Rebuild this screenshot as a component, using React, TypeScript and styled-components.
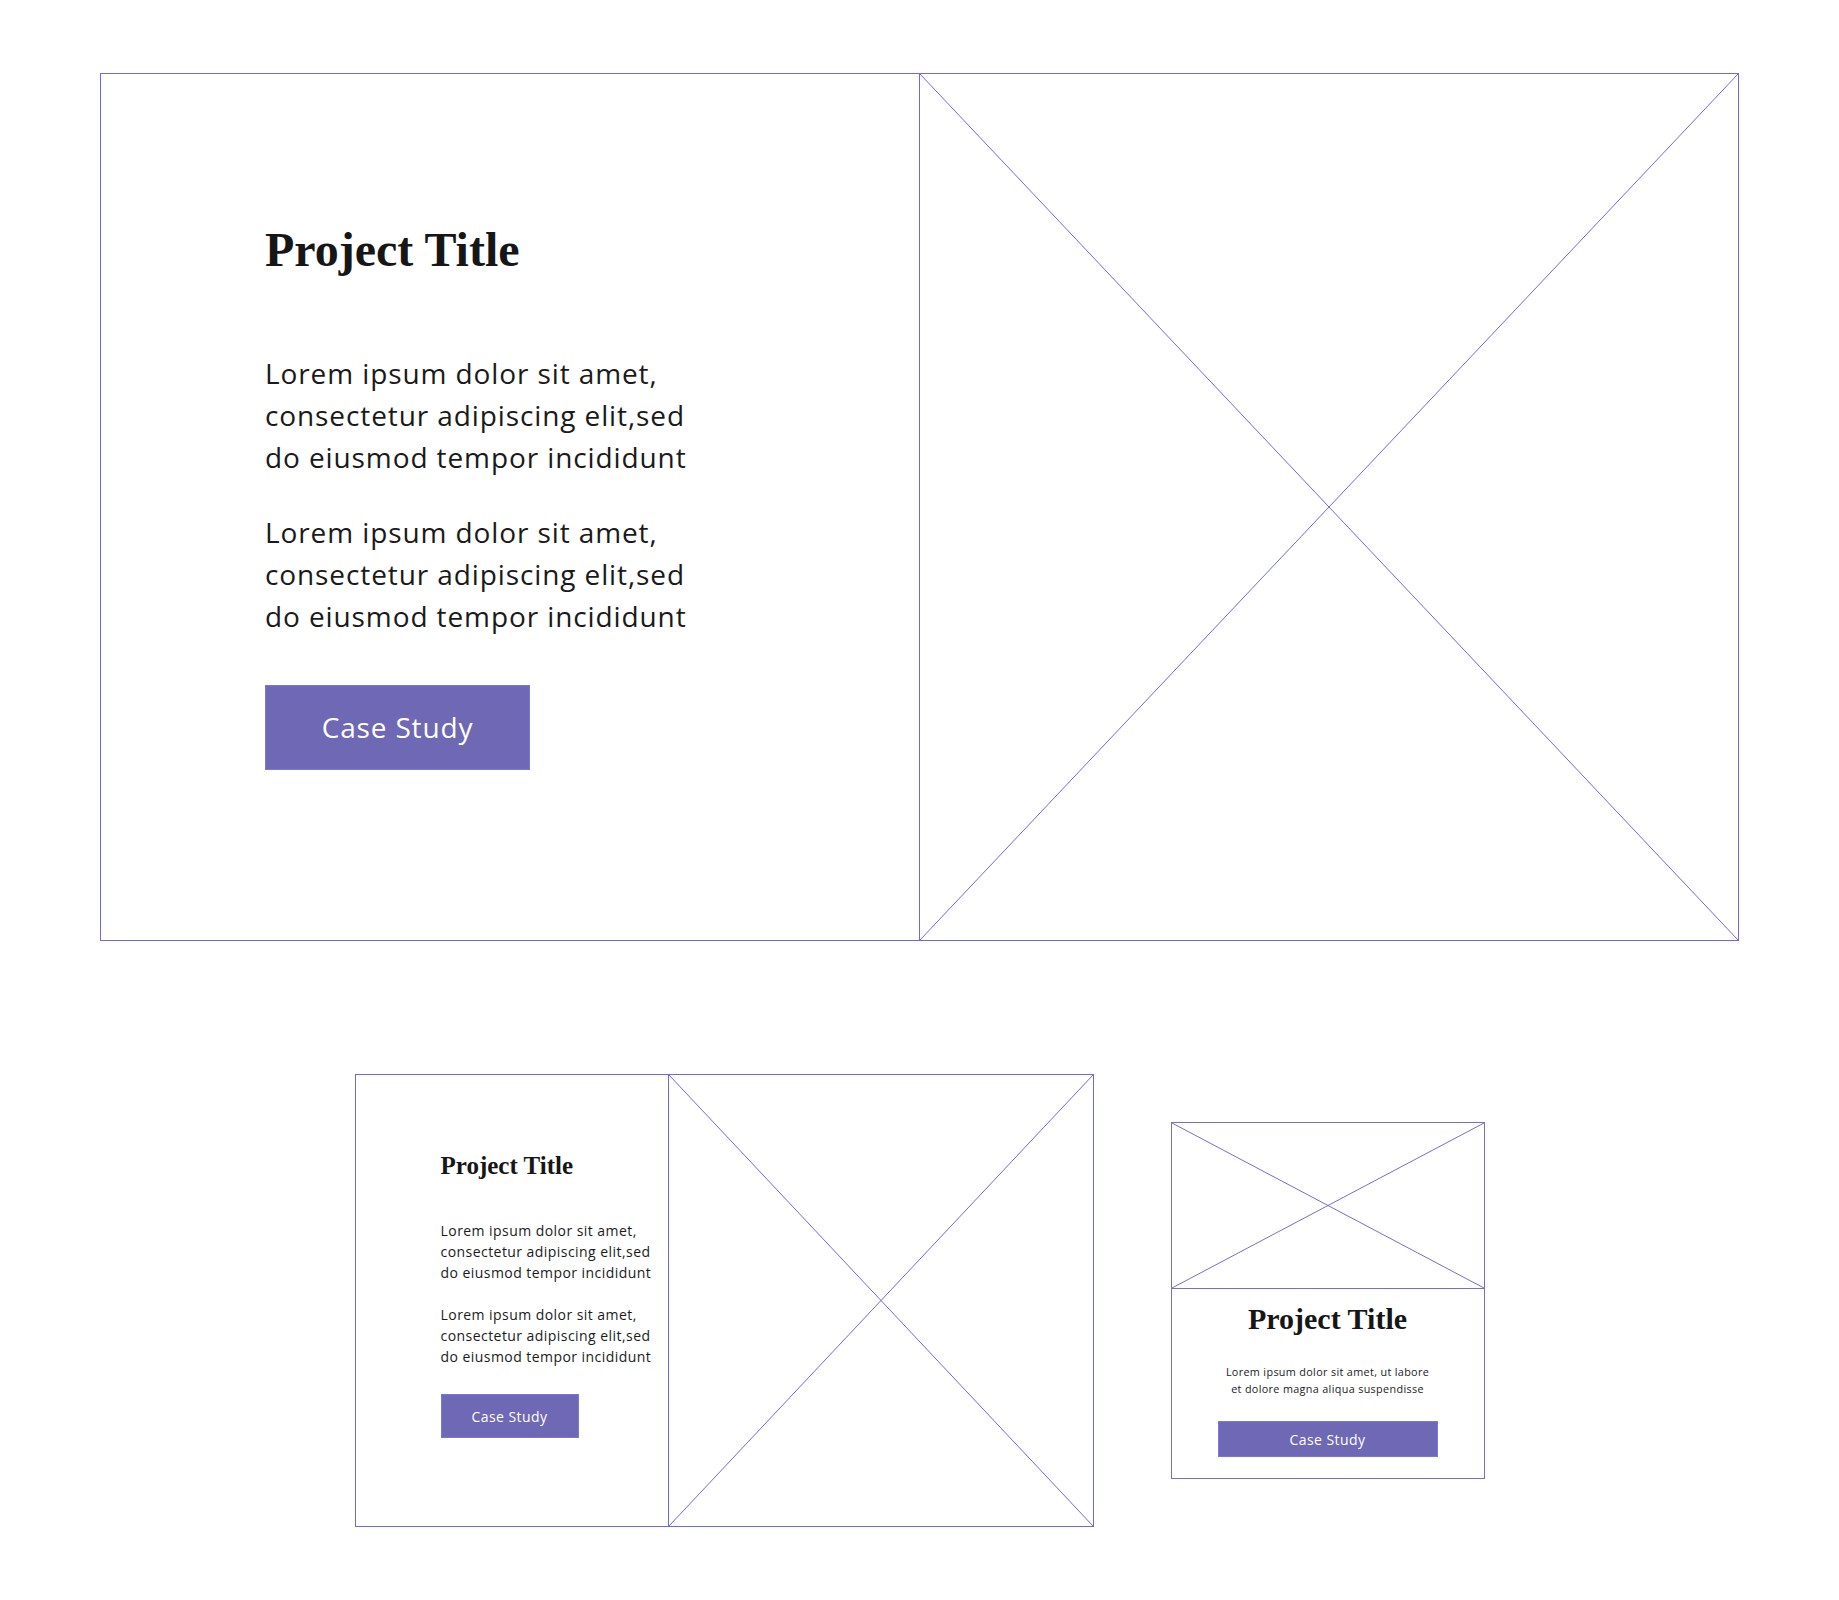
import React from 'react';
import styled, { createGlobalStyle } from 'styled-components';

const LINE = '#6f69e0';
const MUTED_LINE = '#7570c4';
const ACCENT = '#6f68b4';

const GlobalStyle = createGlobalStyle`
  html, body {
    margin: 0;
    padding: 0;
    background: #fff;
  }
  body {
    font-family: 'Open Sans', 'Noto Sans', sans-serif;
    color: #1a1a1a;
  }
`;

const Page = styled.div`
  width: 1839px;
  padding-top: 73px;
  padding-bottom: 73px;
  display: flex;
  flex-direction: column;
  align-items: center;
  gap: 133px;
`;

const Card = styled.div<{ width: number; height: number; lineColor?: string }>`
  box-sizing: border-box;
  width: ${({ width }) => width}px;
  height: ${({ height }) => height}px;
  border: 1px solid ${({ lineColor }) => lineColor || LINE};
  display: flex;
  background: #fff;
`;

const StackCard = styled(Card)`
  flex-direction: column;
`;

const TextPanel = styled.div<{ width: number; padTop: number; padLeft: number }>`
  box-sizing: border-box;
  width: ${({ width }) => width}px;
  flex: none;
  padding: ${({ padTop, padLeft }) => `${padTop}px 0 0 ${padLeft}px`};
  display: flex;
  flex-direction: column;
  align-items: flex-start;
`;

const CenterPanel = styled.div`
  flex: 1;
  padding-top: 12px;
  display: flex;
  flex-direction: column;
  align-items: center;
  text-align: center;
`;

const Title = styled.h2<{ size: number; gap: number }>`
  margin: 0 0 ${({ gap }) => gap}px;
  font-family: 'Liberation Serif', 'Times New Roman', serif;
  font-weight: 700;
  font-size: ${({ size }) => size}px;
  line-height: 1.2;
  color: #161616;
  white-space: nowrap;
`;

const Para = styled.p<{ size: number; lh: number; gap: number }>`
  margin: 0 0 ${({ gap }) => gap}px;
  font-size: ${({ size }) => size}px;
  line-height: ${({ lh }) => lh}px;
  letter-spacing: 0.032em;
  font-weight: 400;
  white-space: nowrap;
`;

const Button = styled.button<{ w: number; h: number; size: number }>`
  box-sizing: border-box;
  width: ${({ w }) => w}px;
  height: ${({ h }) => h}px;
  flex: none;
  background: ${ACCENT};
  border: 1px solid #7b76dc;
  color: #fff;
  font-family: 'Open Sans', 'Noto Sans', sans-serif;
  font-size: ${({ size }) => size}px;
  letter-spacing: 0.03em;
  font-weight: 400;
  padding: 0;
  cursor: pointer;
`;

const ImageBox = styled.div<{ lineColor?: string; height?: number }>`
  flex: 1;
  ${({ height }) => (height ? `flex: none; height: ${height}px;` : '')}
  border-left: 1px solid ${({ lineColor }) => lineColor || LINE};
`;

const TopImage = styled(ImageBox)`
  border-left: none;
  border-bottom: 1px solid ${({ lineColor }) => lineColor || LINE};
`;

const Cross = styled.svg`
  display: block;
  width: 100%;
  height: 100%;
`;

function Placeholder({ color }: { color: string }) {
  return (
    <Cross viewBox="0 0 100 100" preserveAspectRatio="none">
      <line x1="0" y1="0" x2="100" y2="100" stroke={color} strokeWidth="1" vectorEffect="non-scaling-stroke" />
      <line x1="100" y1="0" x2="0" y2="100" stroke={color} strokeWidth="1" vectorEffect="non-scaling-stroke" />
    </Cross>
  );
}

const Row = styled.div`
  display: flex;
  align-items: center;
  gap: 77px;
`;

const lorem = (
  <>
    Lorem ipsum dolor sit amet,
    <br />
    consectetur adipiscing elit,sed
    <br />
    do eiusmod tempor incididunt
  </>
);

export default function App() {
  return (
    <>
      <GlobalStyle />
      <Page>
        <Card width={1639} height={868}>
          <TextPanel width={818} padTop={147} padLeft={164}>
            <Title size={48} gap={73}>Project Title</Title>
            <Para size={28} lh={42} gap={33}>{lorem}</Para>
            <Para size={28} lh={42} gap={48}>{lorem}</Para>
            <Button w={265} h={85} size={28}>Case Study</Button>
          </TextPanel>
          <ImageBox>
            <Placeholder color={LINE} />
          </ImageBox>
        </Card>

        <Row>
          <Card width={739} height={453}>
            <TextPanel width={312} padTop={76} padLeft={85}>
              <Title size={25} gap={39}>Project Title</Title>
              <Para size={14} lh={21} gap={21}>{lorem}</Para>
              <Para size={14} lh={21} gap={27}>{lorem}</Para>
              <Button w={138} h={44} size={14}>Case Study</Button>
            </TextPanel>
            <ImageBox>
              <Placeholder color={LINE} />
            </ImageBox>
          </Card>

          <StackCard width={314} height={357} lineColor={MUTED_LINE}>
            <TopImage height={165} lineColor={MUTED_LINE}>
              <Placeholder color={MUTED_LINE} />
            </TopImage>
            <CenterPanel>
              <Title size={30} gap={26}>Project Title</Title>
              <Para size={10.8} lh={17} gap={24}>
                Lorem ipsum dolor sit amet, ut labore
                <br />
                et dolore magna aliqua suspendisse
              </Para>
              <Button w={220} h={36} size={14}>Case Study</Button>
            </CenterPanel>
          </StackCard>
        </Row>
      </Page>
    </>
  );
}
